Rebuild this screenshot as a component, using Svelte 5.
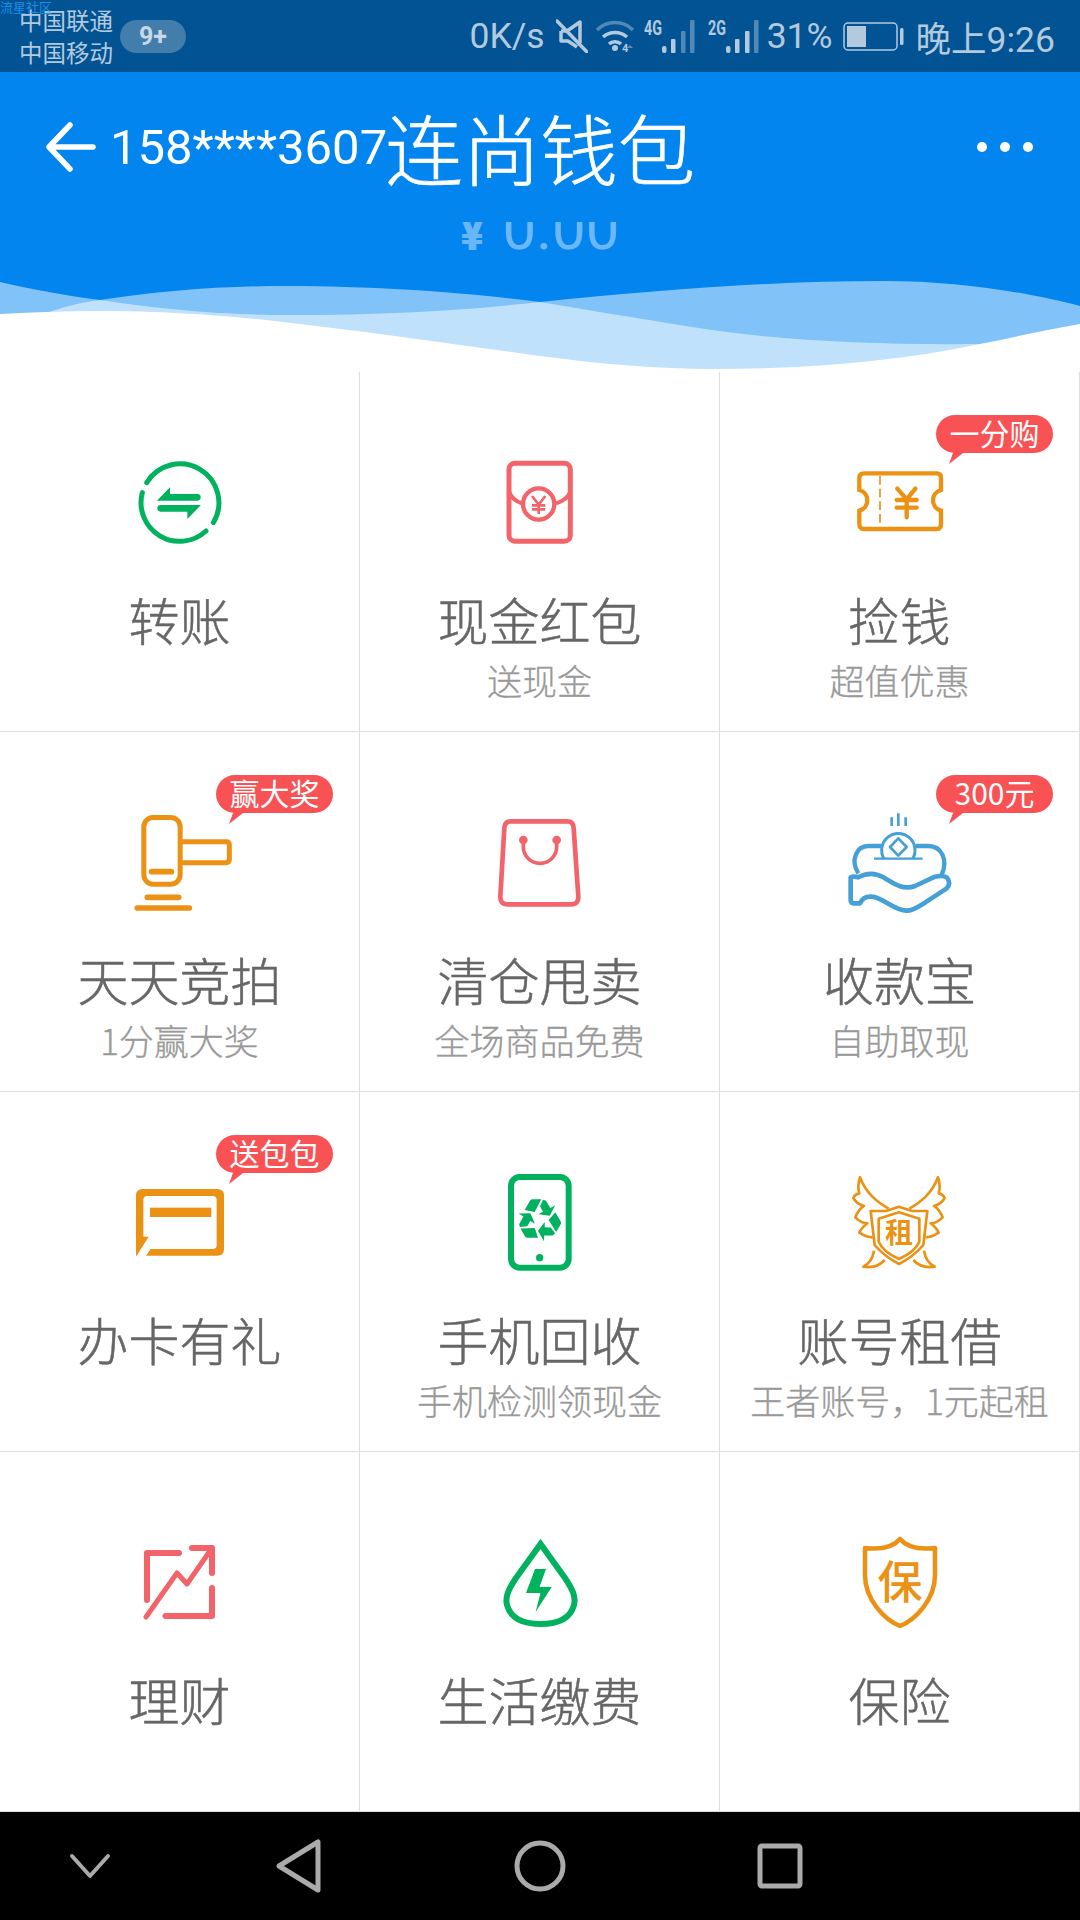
<script lang="ts">
  const cells = [
    { icon: "transfer", title: "转账" },
    { icon: "packet", title: "现金红包", sub: "送现金" },
    { icon: "ticket", title: "捡钱", sub: "超值优惠", badge: "一分购" },
    { icon: "hammer", title: "天天竞拍", sub: "1分赢大奖", badge: "赢大奖" },
    { icon: "bag", title: "清仓甩卖", sub: "全场商品免费" },
    { icon: "cash", title: "收款宝", sub: "自助取现", badge: "300元" },
    { icon: "card", title: "办卡有礼", badge: "送包包" },
    { icon: "recycle", title: "手机回收", sub: "手机检测领现金" },
    { icon: "wings", title: "账号租借", sub: "王者账号，1元起租" },
    { icon: "chart", title: "理财" },
    { icon: "drop", title: "生活缴费" },
    { icon: "shield", title: "保险" },
  ];
</script>

<div class="phone">
  <div class="top">
    <div class="status">
      <span class="watermark">流星社区</span>
      <div class="carriers">
        <span>中国联通</span>
        <span>中国移动</span>
      </div>
      <span class="count">9+</span>
      <div class="status-right">
        <span class="speed">0K/s</span>
        <svg class="mute" viewBox="0 0 32 34" fill="none" stroke="currentColor" stroke-width="3.5">
          <path d="M5 12h6l13-9v21M5 12v10h7l9 6" stroke-linejoin="round" />
          <path d="M1 2l30 31" stroke-linecap="round" />
        </svg>
        <svg class="wifi" viewBox="0 0 40 34" fill="none" stroke="currentColor" stroke-width="3.5">
          <path d="M2 11c10-10 26-10 36 0" opacity=".45" />
          <path d="M8 18c7-6 17-6 24 0" />
          <path d="M14 25c3-3 9-3 12 0" />
          <circle cx="20" cy="29" r="3" fill="currentColor" stroke="none" />
          <text x="27" y="33" font-size="11" font-family="Roboto" font-weight="700" fill="currentColor" stroke="none">4</text>
          <path d="M35 26l3 3h-6z" fill="currentColor" stroke="none" opacity=".5" />
        </svg>
        <svg class="sig" viewBox="0 0 52 34" fill="currentColor">
          <text x="0" y="16" font-size="20" font-family="Roboto" font-weight="700" textLength="18" lengthAdjust="spacingAndGlyphs">4G</text>
          <rect x="18" y="27" width="4.500" height="7" rx="2" />
          <rect x="27" y="20" width="4.500" height="14" rx="1" />
          <rect x="37" y="12" width="4.500" height="22" rx="1" opacity=".45" />
          <rect x="46" y="1" width="4.500" height="33" rx="1" opacity=".45" />
        </svg>
        <svg class="sig second" viewBox="0 0 52 34" fill="currentColor">
          <text x="0" y="16" font-size="20" font-family="Roboto" font-weight="700" textLength="18" lengthAdjust="spacingAndGlyphs">2G</text>
          <rect x="18" y="27" width="4.500" height="7" rx="2" />
          <rect x="27" y="20" width="4.500" height="14" rx="1" />
          <rect x="37" y="12" width="4.500" height="22" rx="1" />
          <rect x="46" y="1" width="4.500" height="33" rx="1" opacity=".45" />
        </svg>
        <span class="pct">31%</span>
        <svg class="batt" viewBox="0 0 61 29" fill="none" stroke="currentColor">
          <rect x="1" y="1" width="53" height="27" rx="4" stroke-width="1.500" />
          <rect x="4" y="4" width="19" height="21" fill="currentColor" stroke="none" />
          <rect x="57" y="6" width="3.500" height="17" rx="1.500" fill="currentColor" stroke="none" />
        </svg>
        <span class="clock">晚上9:26</span>
      </div>
    </div>

    <div class="appbar">
      <svg class="back" viewBox="0 0 50 50" fill="none" stroke="#fff" stroke-width="5.500" stroke-linecap="round" stroke-linejoin="round">
        <path d="M47 25H4M24 3L3 25l21 22" />
      </svg>
      <span class="account">158****3607</span>
      <span class="title">连尚钱包</span>
      <div class="dots"><i></i><i></i><i></i></div>
    </div>

    <div class="amount">
      <span class="yen">¥</span><span class="num">0.00</span>
    </div>

    <svg class="wave" viewBox="0 270 1080 102" preserveAspectRatio="none">
      <path d="M0 282C35 290 70 296 100 300C160 309 220 315 290 315C390 315 470 310 540 302C660 290 770 281 884 281C960 281 1030 293 1080 306V372H0Z" fill="#fff" fill-opacity=".5" />
      <path d="M0 340L52 311C70 305 85 302 100 300C160 291 220 286 285 286C380 286 470 293 540 302C600 312 660 322 712 330C790 341 880 345 980 344L1080 340V372H0Z" fill="#fff" fill-opacity=".5" />
      <path d="M0 314C35 312 70 311 103 311C160 311 220 315 275 321C370 332 460 345 540 356C600 364 660 369 712 369C810 369 900 361 980 344C1015 337 1050 329 1080 324V372H0Z" fill="#fff" />
    </svg>
  </div>

  <div class="grid">
    {#each cells as cell}
      <div class="cell">
        {#if cell.badge}
          <span class="badge">{cell.badge}</span>
        {/if}

        {#if cell.icon === "transfer"}
          <svg class="icon" viewBox="60 66 360 360" fill="none" stroke="#00b25d" stroke-width="15" stroke-linecap="round">
            <path d="M140 188A116 116 0 0 1 340 308" />
            <path d="M318 333A116 116 0 0 1 127 218" />
            <path d="M172 241L210 202V222H292Q302 222 302 232Q302 242 292 242H172Z" fill="#00b25d" stroke="none" />
            <path d="M302 256L262 297V275H182Q172 275 172 265Q172 255 182 255H302Z" fill="#00b25d" stroke="none" />
          </svg>
        {:else if cell.icon === "packet"}
          <svg class="icon" viewBox="1140 66 360 360" fill="none" stroke="#f26469" stroke-width="15">
            <rect x="1227" y="130" width="184" height="234" rx="18" />
            <path d="M1227 215Q1236 240 1266 250M1411 215Q1402 240 1368 250" stroke-width="12" />
            <circle cx="1316" cy="252" r="47" stroke-width="13" />
            <path d="M1296 228L1316 254L1336 228M1316 254V282M1296 256H1336M1296 268H1336" stroke-width="8" />
          </svg>
        {:else if cell.icon === "ticket"}
          <svg class="icon" viewBox="120 126 360 360" fill="none" stroke="#eb9114" stroke-width="13">
            <path d="M192 220H410Q423 220 423 233V270A32 32 0 0 0 423 332V373Q423 387 410 387H192Q178 387 178 373V332A32 32 0 0 0 178 270V233Q178 220 192 220Z" />
            <path d="M240 228V380" stroke-width="5" stroke-dasharray="26 12" />
            <path d="M292 266L320 298L346 266M320 298V352M290 300H350M290 323H350" stroke-width="13" stroke-linecap="round" />
          </svg>
        {:else if cell.icon === "hammer"}
          <svg class="icon" viewBox="60 126 360 360" fill="none" stroke="#eb9114" stroke-width="15" stroke-linecap="round">
            <rect x="131.500" y="172.500" width="109" height="200" rx="28" />
            <path d="M155 335H214" stroke-width="17" />
            <path d="M244 245H378Q388 245 388 255V298Q388 308 378 308H244" stroke-linecap="butt" />
            <path d="M142 412H236M112 444H268" stroke-width="17" />
          </svg>
        {:else if cell.icon === "bag"}
          <svg class="icon" viewBox="30 6 360 360" fill="none" stroke="#f26469" stroke-width="14">
            <path d="M122 64H292Q310 64 311 84L325 290Q326 313 303 313H113Q90 313 91 290L103 84Q104 64 122 64Z" />
            <path d="M160 120V140A50 50 0 0 0 260 140V120" stroke-width="11" />
            <circle cx="160" cy="120" r="13" fill="#f26469" stroke="none" />
            <circle cx="260" cy="120" r="13" fill="#f26469" stroke="none" />
          </svg>
        {:else if cell.icon === "cash"}
          <svg class="icon" viewBox="120 126 360 360" fill="none" stroke="#44a0d6" stroke-width="11" stroke-linejoin="round">
            <path d="M275 172V198M295 160V198M317 172V198" stroke-width="8" />
            <path d="M252 296A50 50 0 1 1 338 296" stroke-width="9" />
            <path d="M295 235L320 261L295 287L270 261Z" stroke-width="8" />
            <path d="M222 296H368" stroke-width="7" />
            <path d="M243 258H205C170 258 150 300 175 340M347 258H385C425 258 445 300 425 345" stroke-width="13" />
            <path d="M152 352V420Q152 430 162 430H180Q190 408 215 410C250 412 280 452 320 452C340 452 355 440 375 428L440 385Q455 370 440 352Q430 345 405 350L345 378C310 392 280 370 250 352C225 338 200 338 175 352Q160 348 152 352Z" fill="#fffdfb" stroke-width="14" />
          </svg>
        {:else if cell.icon === "card"}
          <svg class="icon" viewBox="0 96 360 360" fill="#eb9114">
            <path d="M68 177H292Q312 177 312 197V357Q312 377 292 377H78L92 357H278Q290 357 290 345V210Q290 198 278 198H82Q70 198 70 210V320H86L50 377H48V197Q48 177 68 177Z" />
            <rect x="90" y="233" width="184" height="28" />
          </svg>
        {:else if cell.icon === "recycle"}
          <svg class="icon" viewBox="0 6 360 360" fill="none" stroke="#00b25d" stroke-width="18">
            <rect x="93" y="51" width="173" height="272" rx="26" />
            <circle cx="179" cy="293" r="11" fill="#00b25d" stroke="none" />
            {#each [0, 120, 240] as turn}
              <g transform="translate(178 180) rotate({turn})" fill="#00b25d" stroke="none">
                <path d="M-44 -30L-28 -58Q-25 -62 -20 -62H6L-14 -24Z" />
                <path d="M11 -61Q16 -60 20 -58L33 -36L48 -44L31 -13L-3 -17L11 -25L2 -41Z" />
              </g>
            {/each}
          </svg>
        {:else if cell.icon === "wings"}
          <svg class="icon" viewBox="30 6 360 360" fill="none" stroke="#eb9114" stroke-width="8" stroke-linejoin="round">
            <path d="M207 140L246 153H292L280 255Q250 290 207 312Q164 290 134 255L122 153H168Z" />
            <path d="M207 157L268 176V245Q255 275 207 297Q159 275 146 245V176Z" />
            {#each ["", "translate(414 0) scale(-1 1)"] as flip}
              <g transform={flip}>
                <path d="M176 146C140 125 108 100 90 52C82 75 85 90 88 100C80 102 72 108 70 114C78 128 90 135 102 138C92 142 80 160 76 172C88 184 100 190 112 190C102 198 92 208 88 218C100 226 118 232 128 232" />
                <path d="M132 272C128 296 116 312 100 320C124 324 148 318 164 300" />
              </g>
            {/each}
            <text x="207" y="250" text-anchor="middle" font-size="84" font-weight="700" fill="#eb9114" stroke="none" font-family="Noto Sans CJK SC">租</text>
          </svg>
        {:else if cell.icon === "chart"}
          <svg class="icon" viewBox="120 1522 120 120" fill="none" stroke="#f26469" stroke-width="6" stroke-linecap="round" stroke-linejoin="round">
            <path d="M179 1553H147V1600M165.500 1616H212V1588M192 1548H212V1573" />
            <path d="M146 1617L177 1573L187 1584L212 1548" stroke-width="5" />
          </svg>
        {:else if cell.icon === "drop"}
          <svg class="icon" viewBox="480 1522 120 120" fill="none" stroke="#00b25d" stroke-width="6">
            <path d="M540.500 1544L516 1578C508 1590 505 1597 507 1605C511 1620 525 1624 540.500 1624C556 1624 570 1620 574 1605C576 1597 573 1590 565 1578Z" />
            <path d="M535 1569H546L539.500 1587H551.700L535.600 1612L540.500 1593H526Z" fill="#00b25d" stroke="none" />
          </svg>
        {:else if cell.icon === "shield"}
          <svg class="icon" viewBox="840 1522 120 120" fill="none" stroke="#eb9114" stroke-width="4.500" stroke-linejoin="round">
            <path d="M865 1548Q890 1551 900 1539Q910 1551 935 1548V1575C935 1600 915 1620 900 1626C885 1620 865 1600 865 1575Z" />
            <text x="900" y="1599" text-anchor="middle" font-size="45" font-weight="500" fill="#eb9114" stroke="none" font-family="Noto Sans CJK SC">保</text>
          </svg>
        {/if}

        <div class="name">{cell.title}</div>
        {#if cell.sub}
          <div class="sub">{cell.sub}</div>
        {/if}
      </div>
    {/each}
  </div>

  <div class="nav">
    <div class="nav-item">
      <svg width="44" height="28" viewBox="0 0 44 28" fill="none" stroke="#aaa" stroke-width="4" stroke-linecap="round" stroke-linejoin="round">
        <path d="M4 4l18 20L40 4" />
      </svg>
    </div>
    <div class="nav-item">
      <svg class="nudge" width="46" height="54" viewBox="0 0 46 54" fill="none" stroke="#aaa" stroke-width="5" stroke-linejoin="round">
        <path d="M42 3V51L3 27Z" />
      </svg>
    </div>
    <div class="nav-item">
      <svg width="52" height="52" viewBox="0 0 52 52" fill="none" stroke="#aaa" stroke-width="5">
        <circle cx="26" cy="26" r="23" />
      </svg>
    </div>
    <div class="nav-item">
      <svg width="46" height="46" viewBox="0 0 46 46" fill="none" stroke="#aaa" stroke-width="5" stroke-linejoin="round">
        <rect x="3" y="3" width="40" height="40" rx="2" />
      </svg>
    </div>
  </div>
</div>

<style>
  :global(body) {
    margin: 0;
    background: #fff;
  }

  .phone {
    width: 1080px;
    height: 1920px;
    overflow: hidden;
    font-family: "Noto Sans CJK SC", "Noto Sans", sans-serif;
  }

  .top {
    background: #0385f0;
  }

  .status {
    position: relative;
    height: 72px;
    display: flex;
    align-items: center;
    padding: 0 25px 0 19px;
    box-sizing: border-box;
    background: #015394;
    color: #b3c9dd;
  }

  .watermark {
    position: absolute;
    left: 0;
    top: 0;
    font-size: 13px;
    line-height: 13px;
    color: #1a8fe6;
  }

  .carriers {
    display: flex;
    flex-direction: column;
    font-size: 23.500px;
    line-height: 32px;
  }

  .count {
    width: 66px;
    height: 33px;
    margin-left: 7px;
    border-radius: 17px;
    background: #437dab;
    color: #c8d8e7;
    font: 700 25px/33px Roboto, sans-serif;
    text-align: center;
  }

  .status-right {
    margin-left: auto;
    display: flex;
    align-items: center;
    font-family: Roboto, "Noto Sans CJK SC", sans-serif;
    font-size: 35.500px;
  }

  .mute {
    width: 32px;
    height: 34px;
    margin-left: 11px;
  }

  .wifi {
    width: 40px;
    height: 34px;
    margin-left: 7px;
  }

  .sig {
    width: 52px;
    height: 34px;
    margin-left: 9px;
  }

  .sig.second {
    margin-left: 12px;
  }

  .pct {
    margin-left: 7px;
  }

  .batt {
    width: 61px;
    height: 29px;
    margin-left: 10px;
  }

  .clock {
    margin-left: 12px;
  }

  .appbar {
    height: 150px;
    display: flex;
    align-items: center;
    padding: 0 47px 0 46px;
    box-sizing: border-box;
    color: #fff;
  }

  .back {
    width: 50px;
    height: 50px;
    flex: none;
  }

  .account {
    margin-left: 14px;
    font: 400 49px Roboto, sans-serif;
    white-space: nowrap;
  }

  .title {
    margin-left: -2px;
    font-size: 77.500px;
    font-weight: 300;
    -webkit-text-stroke: 0.6px #fff;
    line-height: 1;
    white-space: nowrap;
  }

  .dots {
    margin-left: auto;
    display: flex;
    gap: 13px;
  }

  .dots i {
    width: 10px;
    height: 10px;
    border-radius: 50%;
    background: #fff;
  }

  .amount {
    height: 29px;
    overflow: hidden;
    display: flex;
    justify-content: center;
    align-items: flex-end;
    color: rgba(255, 255, 255, 0.42);
  }

  .yen {
    font: 900 44px/1 Roboto, sans-serif;
    margin-right: 18px;
    margin-bottom: -6px;
  }

  .num {
    font: 400 60px/1 Roboto, sans-serif;
    margin-bottom: -8px;
  }

  .wave {
    display: block;
    width: 1080px;
    height: 102px;
    margin-top: 19px;
  }

  .grid {
    display: grid;
    grid-template-columns: repeat(3, 360px);
    grid-auto-rows: 360px;
  }

  .cell {
    position: relative;
    box-sizing: border-box;
    padding-top: 70px;
    display: flex;
    flex-direction: column;
    align-items: center;
    border-right: 1px solid #ddd;
    border-bottom: 1px solid #ddd;
  }

  .icon {
    display: block;
    width: 120px;
    height: 120px;
    flex: none;
  }

  .name {
    margin-top: 27px;
    font-size: 51px;
    font-weight: 300;
    -webkit-text-stroke: 0.5px #666;
    line-height: 60px;
    color: #666;
  }

  .sub {
    margin-top: 11px;
    font-size: 35px;
    font-weight: 300;
    -webkit-text-stroke: 0.3px #999;
    line-height: 40px;
    color: #999;
    white-space: nowrap;
  }

  .badge {
    position: absolute;
    top: 43px;
    right: 26px;
    width: 117px;
    height: 38px;
    border-radius: 19px;
    background: #f85255;
    color: #fff;
    font-size: 30px;
    font-weight: 400;
    line-height: 35px;
    text-align: center;
  }

  .badge::after {
    content: "";
    position: absolute;
    left: 13px;
    top: 38px;
    width: 14px;
    height: 11px;
    background: #f85255;
    clip-path: polygon(0 100%, 4px 0, 14px 0);
  }

  .nav {
    height: 108px;
    background: #000;
    display: grid;
    grid-template-columns: 180px 240px 240px 240px;
  }

  .nav-item {
    display: flex;
    align-items: center;
    justify-content: center;
  }

  .nudge {
    margin-right: 2px;
  }
</style>
